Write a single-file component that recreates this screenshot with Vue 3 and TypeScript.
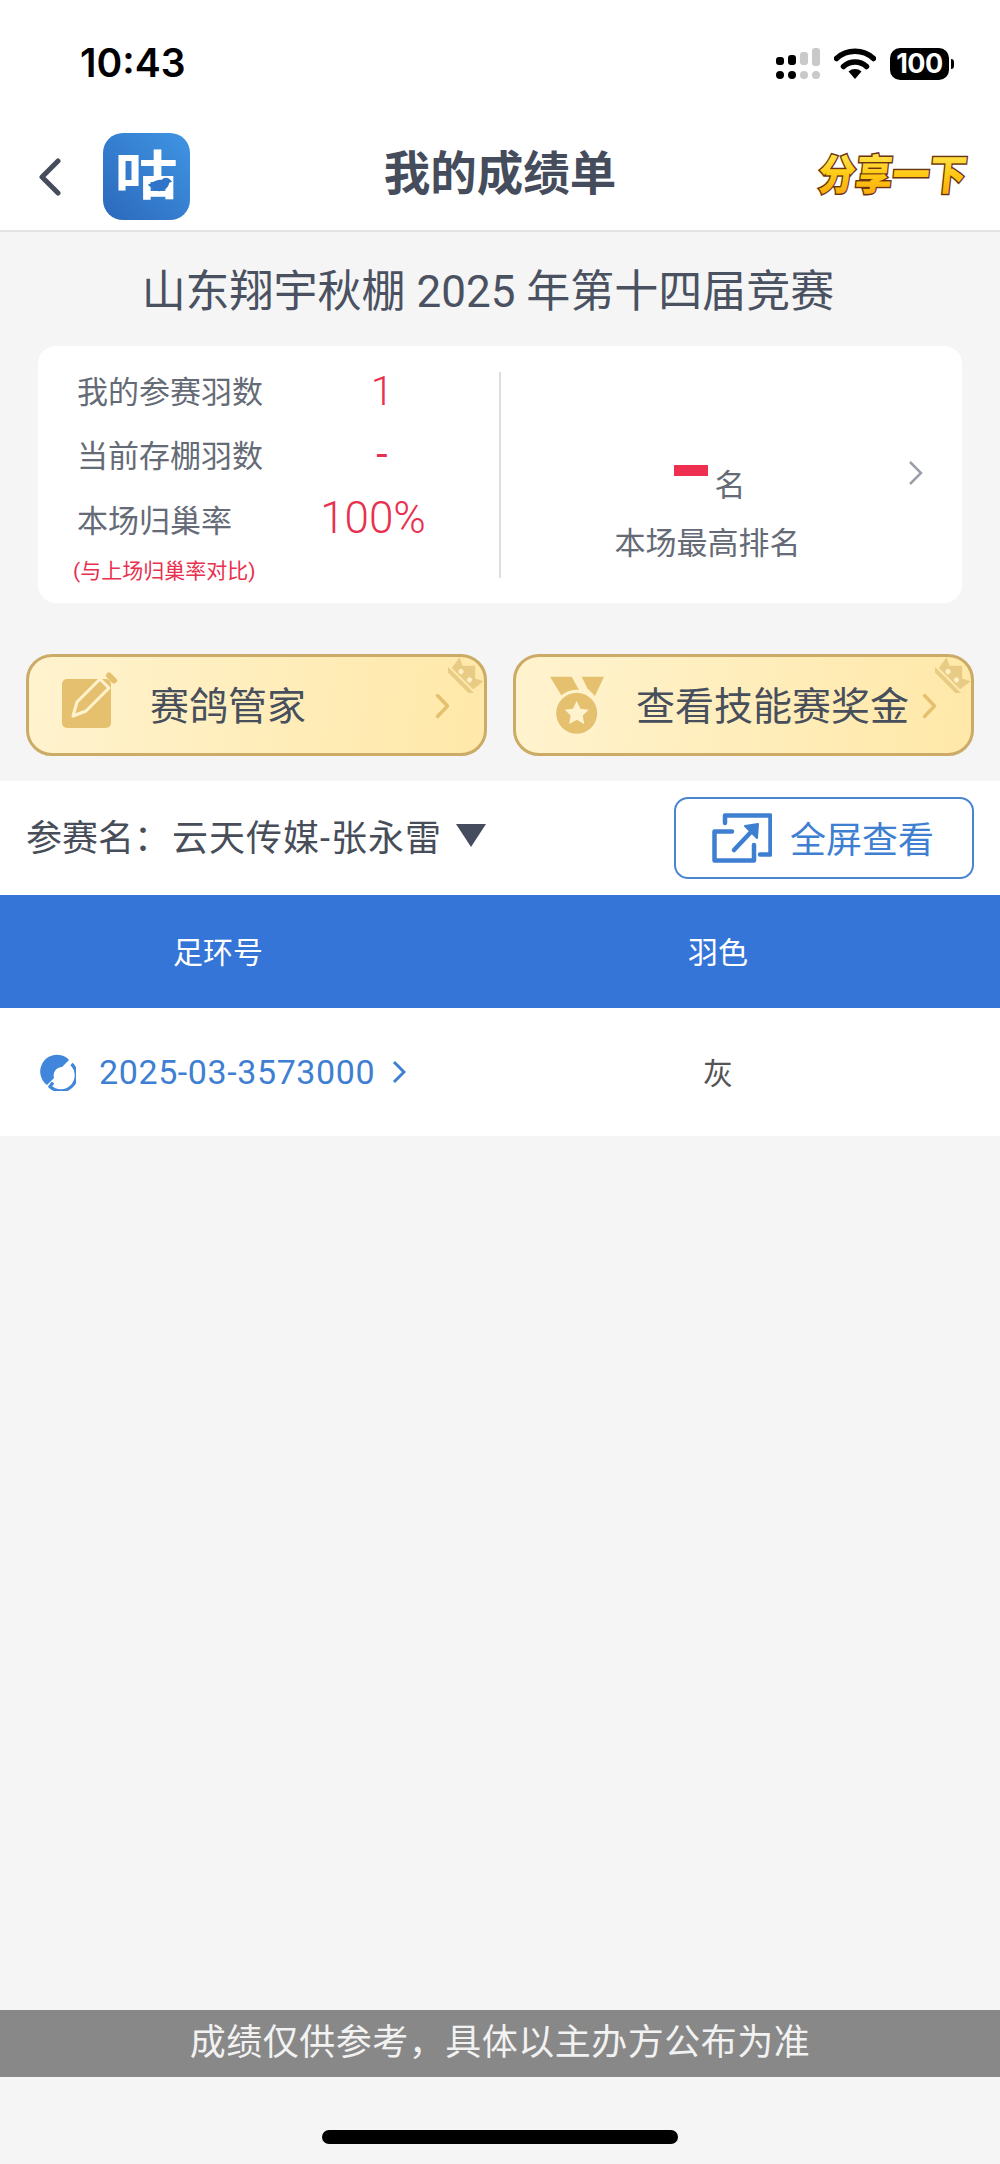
<script setup lang="ts">
const stats = [
  { label: '我的参赛羽数', value: '1' },
  { label: '当前存棚羽数', value: '-' },
  { label: '本场归巢率', value: '100%' },
];
</script>

<template>
  <div class="page">
    <div class="status-bar">
      <span class="time">10:43</span>
      <div class="status-icons">
        <svg class="signal" width="44" height="31" viewBox="0 0 44 31">
          <g fill="#000">
            <rect x="0" y="9" width="8" height="8" rx="3" />
            <rect x="12" y="7" width="8" height="10" rx="3" />
            <circle cx="4" cy="27" r="4" />
            <circle cx="16" cy="27" r="4" />
          </g>
          <g fill="#c9c9c9">
            <rect x="24" y="4" width="8" height="13" rx="3" />
            <rect x="36" y="0" width="8" height="18" rx="3" />
            <circle cx="28" cy="27" r="4" />
            <circle cx="40" cy="27" r="4" />
          </g>
        </svg>
        <svg class="wifi" width="42" height="31" viewBox="0 0 42 31">
          <path d="M21 31l-6.500-7.500a10 10 0 0 1 13 0z" fill="#000" />
          <path d="M9.500 18.500a17 17 0 0 1 23 0M2.500 10.500a27.500 27.500 0 0 1 37 0" fill="none" stroke="#000" stroke-width="5.500" stroke-linecap="round" />
        </svg>
        <div class="battery"><span>100</span><i></i></div>
      </div>
    </div>

    <header class="nav">
      <svg class="back" width="22" height="38" viewBox="0 0 22 38">
        <path d="M19 3L3 19l16 16" fill="none" stroke="#454c5c" stroke-width="5" stroke-linecap="round" stroke-linejoin="round" />
      </svg>
      <div class="logo">
        <span class="logo-glyph">咕</span>
        <svg class="bird" width="26" height="17" viewBox="0 0 28 16">
          <path d="M1 8c5-1 8-6 15-5 2-3 7-3 9 0l2 2-3 1c-1 6-7 10-13 9-3 0-4-2-5-3-1-1-4-2-5-4z" fill="#2f74c8" />
        </svg>
      </div>
      <h1 class="nav-title">我的成绩单</h1>
      <svg class="share" width="152" height="46" viewBox="0 0 152 46">
        <defs>
          <linearGradient id="shareFill" x1="0" y1="0" x2="0" y2="1">
            <stop offset="0" stop-color="#fff36a" />
            <stop offset="0.55" stop-color="#ffc914" />
            <stop offset="1" stop-color="#f7a00a" />
          </linearGradient>
        </defs>
        <text class="share-text" x="2" y="37" transform="skewX(-6) translate(4 0)" textLength="148" lengthAdjust="spacingAndGlyphs">分享一下</text>
      </svg>
    </header>

    <h2 class="match-title">山东翔宇秋棚 2025 年第十四届竞赛</h2>

    <section class="summary">
      <div class="stats">
        <div v-for="s in stats" :key="s.label" class="stat-row">
          <span class="stat-label">{{ s.label }}</span>
          <span class="stat-value">{{ s.value }}</span>
        </div>
        <p class="stat-note">(与上场归巢率对比)</p>
      </div>
      <div class="rank">
        <div class="rank-top"><i class="rank-dash"></i><span>名</span></div>
        <div class="rank-label">本场最高排名</div>
        <svg class="rank-arrow" width="16" height="26" viewBox="0 0 16 26">
          <path d="M2 2l11 11L2 24" fill="none" stroke="#9a9fa9" stroke-width="2.500" />
        </svg>
      </div>
    </section>

    <div class="actions">
      <div class="gold-btn">
        <svg class="gold-icon" width="58" height="58" viewBox="0 0 58 58">
          <rect x="0" y="7" width="49" height="49" rx="5" fill="#e5c16f" />
          <path d="M11 44l4-14L38 7l9 9-23 23z" fill="#e5c16f" stroke="#fff3cf" stroke-width="3" stroke-linejoin="round" />
          <path d="M47 3.500l5 5" fill="none" stroke="#e5c16f" stroke-width="6" stroke-linecap="round" />
        </svg>
        <span class="gold-text first">赛鸽管家</span>
        <svg class="gold-arrow" width="15" height="26" viewBox="0 0 15 26">
          <path d="M2.500 2.500L12.500 13l-10 10.500" fill="none" stroke="#e5c16f" stroke-width="3.500" stroke-linecap="round" stroke-linejoin="round" />
        </svg>
        <svg class="crown" width="36" height="36" viewBox="0 0 36 36">
          <g transform="translate(18 18) rotate(45)">
            <rect x="-18" y="7" width="36" height="4" fill="#e8cb85" />
            <path d="M-15 5l-2-13 8 4 9-9 9 9 8-4-2 13z" fill="#e8cb85" />
            <circle cx="-6" cy="1" r="2.600" fill="#fff0c4" />
            <circle cx="6" cy="1" r="2.600" fill="#fff0c4" />
          </g>
        </svg>
      </div>
      <div class="gold-btn second">
        <svg class="gold-icon medal" width="54" height="58" viewBox="0 0 54 58">
          <path d="M0 .7h21.700L30 15.700 13 22z" fill="#e5c16f" />
          <path d="M31.700 .7H54L45 20l-7.700-7.700z" fill="#e5c16f" />
          <circle cx="26.700" cy="37.300" r="22" fill="#e5c16f" stroke="#fff3cf" stroke-width="3" />
          <path d="M26.700 25l3.700 7.800 8.300 1-6 5.800 1.500 8.400-7.500-4.200-7.500 4.200 1.500-8.400-6-5.800 8.300-1z" fill="#fff3cf" />
        </svg>
        <span class="gold-text">查看技能赛奖金</span>
        <svg class="gold-arrow" width="15" height="26" viewBox="0 0 15 26">
          <path d="M2.500 2.500L12.500 13l-10 10.500" fill="none" stroke="#e5c16f" stroke-width="3.500" stroke-linecap="round" stroke-linejoin="round" />
        </svg>
        <svg class="crown" width="36" height="36" viewBox="0 0 36 36">
          <g transform="translate(18 18) rotate(45)">
            <rect x="-18" y="7" width="36" height="4" fill="#e8cb85" />
            <path d="M-15 5l-2-13 8 4 9-9 9 9 8-4-2 13z" fill="#e8cb85" />
            <circle cx="-6" cy="1" r="2.600" fill="#fff0c4" />
            <circle cx="6" cy="1" r="2.600" fill="#fff0c4" />
          </g>
        </svg>
      </div>
    </div>

    <div class="entrant">
      <div class="entrant-name">
        <span class="entrant-label">参赛名&#65306;</span>
        <span class="entrant-value">云天传媒-张永雷</span>
        <i class="caret"></i>
      </div>
      <button class="fullscreen">
        <svg width="60" height="50" viewBox="0 0 60 50">
          <path d="M13 10V2.500h45.500v39H48" fill="none" stroke="#3f7fd2" stroke-width="4.500" stroke-linecap="round" stroke-linejoin="round" />
          <path d="M20 18.500H2.500v29h39.500V32" fill="none" stroke="#3f7fd2" stroke-width="4.500" stroke-linecap="round" stroke-linejoin="round" />
          <path d="M22 37l17-18" fill="none" stroke="#3f7fd2" stroke-width="4.500" stroke-linecap="round" />
          <path d="M33 13l13-2-1 14z" fill="#3f7fd2" stroke="#3f7fd2" stroke-width="2" stroke-linejoin="round" />
        </svg>
        <span class="fullscreen-text">全屏查看</span>
      </button>
    </div>

    <div class="table-head">
      <span>足环号</span>
      <span>羽色</span>
    </div>
    <div class="table-row">
      <div class="ring-cell">
        <svg width="37" height="37" viewBox="0 0 37 37">
          <path d="M28 4A16.500 16.500 0 0 0 8 31l7-7a8.500 8.500 0 0 1 8-11l7-7z" fill="#3f86dc" />
          <path d="M32.500 10A15.500 15.500 0 0 1 11 32.500l3-4" fill="none" stroke="#3f86dc" stroke-width="3.200" />
        </svg>
        <span class="ring-no">2025-03-3573000</span>
        <svg width="14" height="24" viewBox="0 0 14 24">
          <path d="M2 2l10 10L2 22" fill="none" stroke="#3f7fd2" stroke-width="3" />
        </svg>
      </div>
      <span class="cell-color">灰</span>
    </div>

    <div class="notice">成绩仅供参考&#65292;具体以主办方公布为准</div>
    <div class="home-area"><i class="home-bar"></i></div>
  </div>
</template>

<style scoped>
.page {
  width: 1000px;
  height: 2164px;
  display: flex;
  flex-direction: column;
  background: #f5f5f6;
  font-family: Roboto, "Noto Sans CJK SC", sans-serif;
  color: #4a505c;
  overflow: hidden;
}

.status-bar {
  height: 120px;
  flex: none;
  display: flex;
  align-items: flex-start;
  justify-content: space-between;
  background: #fff;
  padding: 47px 51px 0 80px;
  box-sizing: border-box;
}

.time {
  font-family: Inter, sans-serif;
  font-size: 39px;
  line-height: 32px;
  font-weight: 600;
  color: #000;
}

.status-icons {
  display: flex;
  align-items: flex-start;
  gap: 14px;
  padding-top: 1px;
}

.battery {
  position: relative;
  width: 59px;
  height: 32px;
  border-radius: 10px;
  background: #000;
  color: #fff;
  font-family: Inter, sans-serif;
  font-size: 27px;
  font-weight: 700;
  line-height: 32px;
  text-align: center;
  letter-spacing: -0.5px;
}

.battery i {
  position: absolute;
  left: 61px;
  top: 11px;
  width: 3px;
  height: 10px;
  border-radius: 0 3px 3px 0;
  background: #000;
}

.nav {
  position: relative;
  height: 112px;
  flex: none;
  display: flex;
  align-items: flex-start;
  background: #fff;
  border-bottom: 2px solid #e3e3e3;
  box-sizing: border-box;
  padding: 13px 0 0 39px;
}

.back {
  margin-top: 25px;
}

.logo {
  position: relative;
  width: 87px;
  height: 87px;
  margin-left: 42px;
  border-radius: 20px;
  background: linear-gradient(45deg, #2c68bb, #3f95e4);
  display: flex;
  align-items: center;
  justify-content: center;
  color: #fff;
}

.logo-glyph {
  font-size: 62px;
  font-weight: 700;
  line-height: 87px;
  transform: scale(1.02, 0.86);
}

.bird {
  position: absolute;
  left: 44px;
  top: 43px;
}

.nav-title {
  position: absolute;
  left: 0;
  right: 0;
  top: 24px;
  margin: 0;
  text-align: center;
  font-size: 46.500px;
  line-height: 60px;
  font-weight: 700;
  color: #454c5c;
}

.share {
  margin: 20px 33px 0 auto;
  overflow: visible;
}

.share-text {
  font-family: "Noto Sans CJK SC", sans-serif;
  font-size: 42px;
  font-weight: 900;
  fill: url(#shareFill);
  stroke: #6b3412;
  stroke-width: 3px;
  paint-order: stroke;
}

.match-title {
  margin: 30px 0 0;
  padding-right: 24px;
  text-align: center;
  font-size: 44px;
  line-height: 60px;
  font-weight: 400;
  color: #4a5160;
}

.summary {
  height: 257px;
  flex: none;
  margin: 24px 38px 0;
  padding: 26px 0 25px;
  box-sizing: border-box;
  display: flex;
  background: #fff;
  border-radius: 18px;
}

.stats {
  width: 463px;
  flex: none;
  box-sizing: border-box;
  padding-left: 39px;
  border-right: 2px solid #dedede;
}

.stat-row {
  height: 64.500px;
  display: flex;
  align-items: center;
  position: relative;
  top: -15px;
}

.stat-label {
  width: 246px;
  flex: none;
  font-size: 31px;
  color: #656b76;
}

.stat-value {
  width: 118px;
  text-align: center;
  font-size: 41px;
  font-weight: 300;
  color: #e8304f;
}

.stat-row:nth-child(1) .stat-value {
  padding-top: 3px;
}

.stat-row:nth-child(2) .stat-value {
  font-weight: 400;
}

.stat-row:nth-child(3) .stat-value {
  margin-left: -9px;
  font-size: 44px;
}

.stat-note {
  margin: -9px 0 0 -4px;
  font-size: 21px;
  line-height: 28px;
  color: #e8304f;
}

.rank {
  position: relative;
  flex: 1;
  display: flex;
  flex-direction: column;
  align-items: center;
  padding-right: 48px;
  color: #656b76;
  font-size: 31px;
}

.rank-top {
  display: flex;
  align-items: flex-start;
  height: 40px;
  margin-top: 83px;
  padding-left: 4px;
}

.rank-dash {
  width: 34px;
  height: 11px;
  margin: 10px 7px 0 0;
  background: #ee2f50;
}

.rank-top span {
  line-height: 40px;
  margin-top: 11px;
}

.rank-label {
  margin-top: 29px;
  line-height: 40px;
}

.rank-arrow {
  position: absolute;
  right: 38px;
  top: 88px;
}

.actions {
  display: flex;
  gap: 26px;
  margin: 51px 26px 0;
}

.gold-btn {
  position: relative;
  flex: 1;
  height: 102px;
  box-sizing: border-box;
  display: flex;
  align-items: center;
  border: 3px solid #cbab66;
  border-radius: 26px;
  background: linear-gradient(100deg, #fff3cf, #ffe8a8);
}

.gold-icon {
  margin-left: 33px;
  margin-top: -8px;
}

.gold-icon.medal {
  margin-left: 34px;
  margin-top: 0;
}

.gold-text {
  margin-left: 32px;
  padding-top: 3px;
  font-size: 39px;
  line-height: 50px;
  color: #474e5c;
}

.gold-text.first {
  margin-left: 30px;
}

.gold-arrow {
  position: absolute;
  right: 34px;
  top: 36px;
}

.crown {
  position: absolute;
  right: 0;
  top: 0;
}

.entrant {
  height: 114px;
  flex: none;
  margin-top: 25px;
  display: flex;
  align-items: flex-start;
  justify-content: space-between;
  box-sizing: border-box;
  padding: 16px 26px 0;
  background: #fff;
}

.entrant-name {
  display: flex;
  align-items: center;
  height: 76px;
  font-size: 36px;
  color: #474d59;
}

.entrant-label {
  width: 146px;
  flex: none;
}

.entrant-value {
  letter-spacing: 1px;
}

.caret {
  width: 0;
  height: 0;
  margin-left: 14px;
  border-left: 15px solid transparent;
  border-right: 15px solid transparent;
  border-top: 23px solid #454c5e;
}

.fullscreen {
  width: 300px;
  height: 82px;
  display: flex;
  align-items: center;
  padding: 0 0 0 36px;
  box-sizing: border-box;
  gap: 18px;
  border: 2px solid #4a86d0;
  border-radius: 14px;
  background: #fff;
  font-family: inherit;
  font-size: 36px;
  color: #3f7fd2;
}

.fullscreen-text {
  padding-bottom: 3px;
}

.table-head,
.table-row {
  display: grid;
  grid-template-columns: 436px 1fr;
  align-items: center;
  flex: none;
}

.table-head {
  height: 113px;
  background: #3575d8;
  color: #fff;
  font-size: 30px;
  text-align: center;
}

.table-head span {
  padding-bottom: 4px;
}

.table-row {
  height: 128px;
  background: #fff;
}

.ring-cell {
  display: flex;
  align-items: center;
  padding-left: 39px;
}

.ring-no {
  margin: 0 17px 0 23px;
  font-size: 34px;
  letter-spacing: 0.6px;
  color: #3f7fd2;
}

.cell-color {
  padding-bottom: 3px;
  text-align: center;
  font-size: 30px;
  color: #555;
}

.notice {
  height: 67px;
  flex: none;
  margin-top: auto;
  background: #888;
  color: #f2f2f2;
  text-align: center;
  font-size: 36px;
  line-height: 67px;
  letter-spacing: 0.5px;
}

.home-area {
  height: 87px;
  flex: none;
  display: flex;
  justify-content: center;
  padding-top: 53px;
  box-sizing: border-box;
}

.home-bar {
  width: 356px;
  height: 14px;
  border-radius: 7px;
  background: #000;
}
</style>

<style>
html,
body {
  margin: 0;
  background: #f5f5f6;
}
</style>
